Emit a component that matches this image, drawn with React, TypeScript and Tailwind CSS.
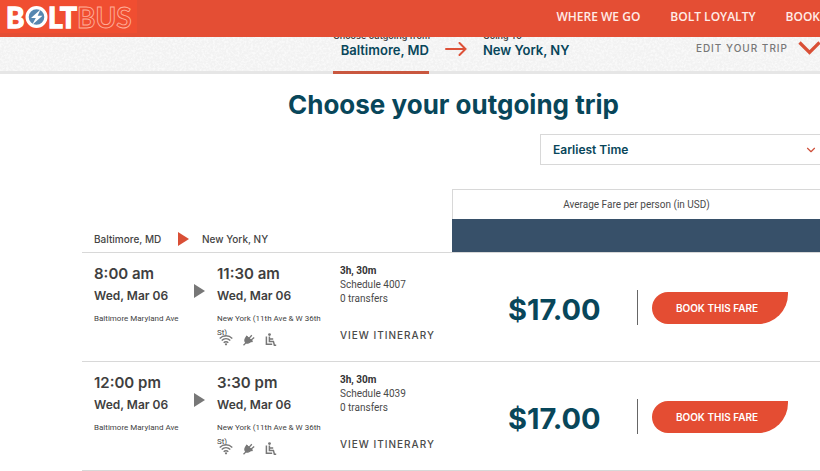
import { ChevronDown } from 'lucide-react'

const trips = [
    { schedule: '4007', departs: '8:00 am', arrives: '11:30 am' },
    { schedule: '4039', departs: '12:00 pm', arrives: '3:30 pm' },
]

function Logo() {
    return (
        <svg viewBox="0 0 140 37" className="h-[37px] w-[140px]" fontFamily="Lato, sans-serif" role="img" aria-label="BoltBus">
            <rect width="137" height="33" fill="#f04e31" />
            <g fontSize="28" fontWeight="700" fill="#fff" stroke="#fff" strokeWidth="1.4">
                <text x="6" y="28">B</text>
                <text x="48" y="28">LT</text>
            </g>
            <circle cx="36.5" cy="17" r="9.4" fill="#5787b0" stroke="#fff" strokeWidth="3.2" />
            <path d="M40.5 9.5 31 18h4.8L32 25l10.5-9.2h-4.8z" fill="#fff" />
            <text x="77" y="28" fontSize="28" fontWeight="700" fill="none" stroke="#ffae9b" strokeWidth="0.9">
                BUS
            </text>
        </svg>
    )
}

function Triangle({ className }: { className: string }) {
    return (
        <svg viewBox="0 0 11 14" className={className} aria-hidden="true">
            <path d="M0 0 11 7 0 14z" fill="currentColor" />
        </svg>
    )
}

function Amenities() {
    return (
        <div className="flex items-center gap-[10px] pl-[2px] text-[#777]">
            <svg viewBox="0 0 14 12" className="h-3 w-[14px]" fill="none" stroke="currentColor" strokeWidth="1.4" aria-label="Wi-Fi" role="img">
                <path d="M.7 4.4C4.3.9 9.7.9 13.3 4.4M2.7 6.6c2.5-2.4 6.1-2.4 8.6 0M4.7 8.7c1.3-1.3 3.3-1.3 4.6 0" />
                <circle cx="7" cy="10.3" r="1.1" fill="currentColor" stroke="none" />
            </svg>
            <svg viewBox="0 0 12 12" className="h-3 w-3" fill="none" stroke="currentColor" strokeWidth="1.3" aria-label="Power outlet" role="img">
                <path d="M3.6 2.6 2.4 4.6c-.8 1.6-.6 2.9.4 3.8s2.4 1 3.9-.1l2.2-1.4z" fill="currentColor" />
                <path d="M3.4 2.2 9.4 8M6 4.4 8.8 1.2M7.9 6.2l3.3-2.8M3.4 8.4.5 11.3" />
            </svg>
            <svg viewBox="0 0 12 13" className="h-[13px] w-3" fill="none" stroke="currentColor" strokeWidth="1.5" aria-label="Extra legroom" role="img">
                <circle cx="4.5" cy="1.6" r="1.4" fill="currentColor" stroke="none" />
                <path d="M1.4 3.4v7.8h5.8M4.4 3.4v5h4l1 3.9h1.8M4.8 6h3.4" />
            </svg>
        </div>
    )
}

function Stop({ time, place }: { time: string; place: string }) {
    return (
        <div className="font-[Inter,sans-serif] font-semibold text-[#3f3f3f]">
            <div className="text-[15px] leading-5">{time}</div>
            <div className="mt-[2px] text-[12px] leading-5">Wed, Mar 06</div>
            <div className="mt-[6px] font-[Roboto,sans-serif] text-[8px] leading-[14px] font-normal">{place}</div>
        </div>
    )
}

function TripRow({ trip }: { trip: (typeof trips)[number] }) {
    return (
        <li className="flex h-[109px] border-b border-[#d8d8d8]">
            <div className="grid w-[370px] shrink-0 grid-cols-[100px_23px_123px_1fr] pt-[11px] pl-3">
                <Stop time={trip.departs} place="Baltimore Maryland Ave" />
                <Triangle className="mt-5 h-[14px] w-[11px] text-[#777]" />
                <div className="pr-3">
                    <Stop time={trip.arrives} place="New York (11th Ave & W 36th St)" />
                    <div className="-mt-[7px]">
                        <Amenities />
                    </div>
                </div>
                <div className="font-[Roboto,sans-serif] text-[10px] leading-[14px] text-[#4a4a4a]">
                    <div className="font-bold text-[#333]">3h, 30m</div>
                    <div>Schedule {trip.schedule}</div>
                    <div>0 transfers</div>
                    <a href="#itinerary" className="mt-[22px] block font-[Inter,sans-serif] font-medium tracking-widest whitespace-nowrap">
                        VIEW ITINERARY
                    </a>
                </div>
            </div>
            <div className="flex flex-1 items-center pt-px pl-14">
                <div className="w-[129px] pt-1 font-[Inter,sans-serif] text-[29px] font-bold text-[#08465a]">$17.00</div>
                <div className="h-[35px] border-l border-[#666]" />
                <button
                    type="button"
                    className="mt-px ml-[14px] h-8 w-[136px] rounded-l-[16px] rounded-br-[30px] bg-[#e44d33] pr-[6px] font-[Inter,sans-serif] text-[10px] font-semibold text-white"
                >
                    BOOK THIS FARE
                </button>
            </div>
        </li>
    )
}

export default function App() {
    return (
        <div className="overflow-hidden bg-white font-[Inter,sans-serif]">
            <header className="relative z-10 flex h-[37px] items-center justify-between bg-[#e44e34]">
                <a href="#home">
                    <Logo />
                </a>
                <nav className="flex gap-[30px] pb-[3px] font-[Open_Sans,sans-serif] text-[12px] font-semibold text-[#ffece7]">
                    <a href="#where">WHERE WE GO</a>
                    <a href="#loyalty">BOLT LOYALTY</a>
                    <a href="#book">BOOK</a>
                </nav>
            </header>

            <section className="relative flex h-[37px] justify-between border-b-[3px] border-[#e6e6e6] bg-[#f2f2f2]">
                <svg className="absolute inset-0 h-full w-full" aria-hidden="true">
                    <filter id="paper">
                        <feTurbulence type="fractalNoise" baseFrequency="0.45" numOctaves="2" />
                        <feColorMatrix values="0 0 0 0 1  0 0 0 0 1  0 0 0 0 1  3 0 0 0 -1.2" />
                    </filter>
                    <rect width="100%" height="100%" filter="url(#paper)" opacity="0.6" />
                </svg>
                <div className="relative -mt-2 -mb-[3px] ml-[333px] flex text-[13px] leading-5 font-semibold text-[#08465a]">
                    <div className="w-24 border-b-[3px] border-[#c9573f] text-right">
                        <div className="text-[9px] leading-[14px] whitespace-nowrap text-[#444]">Choose outgoing from</div>
                        <div className="-mt-[3px] whitespace-nowrap">Baltimore, MD</div>
                    </div>
                    <svg viewBox="0 0 22 14" className="mx-4 mt-[13px] h-[14px] w-[22px]" fill="none" stroke="#dd5138" strokeWidth="2" strokeLinecap="round" aria-hidden="true">
                        <path d="M1 7h19.5M14.5 1l6 6-6 6" />
                    </svg>
                    <div>
                        <div className="text-[9px] leading-[14px] text-[#444]">Going To</div>
                        <div className="-mt-[3px]">New York, NY</div>
                    </div>
                </div>
                <button type="button" className="relative flex items-center gap-[10px] pb-3 text-[10px] font-medium tracking-widest text-[#777]">
                    EDIT YOUR TRIP
                    <svg viewBox="0 0 22 14" className="h-[14px] w-[22px]" fill="none" stroke="#d94f36" strokeWidth="3.2" aria-hidden="true">
                        <path d="m1.5 1.5 10 10 10-10" />
                    </svg>
                </button>
            </section>

            <main className="pl-[82px]">
                <h1 className="mt-[15px] pl-[206px] text-[26px] leading-8 font-bold text-[#08465a]">Choose your outgoing trip</h1>

                <div className="relative mt-[13px] ml-auto w-[280px]">
                    <select
                        aria-label="Sort trips"
                        className="h-[31px] w-full appearance-none border border-r-0 border-[#d8d8d8] bg-white pl-3 text-[12px] font-semibold text-[#08465a]"
                    >
                        <option>Earliest Time</option>
                    </select>
                    <ChevronDown className="pointer-events-none absolute top-[9px] right-[2px] size-[14px] text-[#cf4f3a]" />
                </div>

                <div className="mt-6 flex h-16 border-b border-[#d8d8d8]">
                    <div className="flex w-[370px] shrink-0 items-end pb-[5px] pl-3 text-[10px] leading-4 font-medium text-[#444]">
                        <span className="w-[84px]">Baltimore, MD</span>
                        <Triangle className="mb-px h-[14px] w-[11px] text-[#d94f36]" />
                        <span className="ml-[13px]">New York, NY</span>
                    </div>
                    <div className="flex-1 text-center font-[Roboto,sans-serif] text-[10px] text-[#4a4a4a]">
                        <div className="h-[30px] border-t border-l border-[#d8d8d8] leading-[30px]">Average Fare per person (in USD)</div>
                        <div className="h-[33px] bg-[#375069]" />
                    </div>
                </div>
                <ul>
                    {trips.map((trip) => (
                        <TripRow key={trip.schedule} trip={trip} />
                    ))}
                </ul>
            </main>
        </div>
    )
}
